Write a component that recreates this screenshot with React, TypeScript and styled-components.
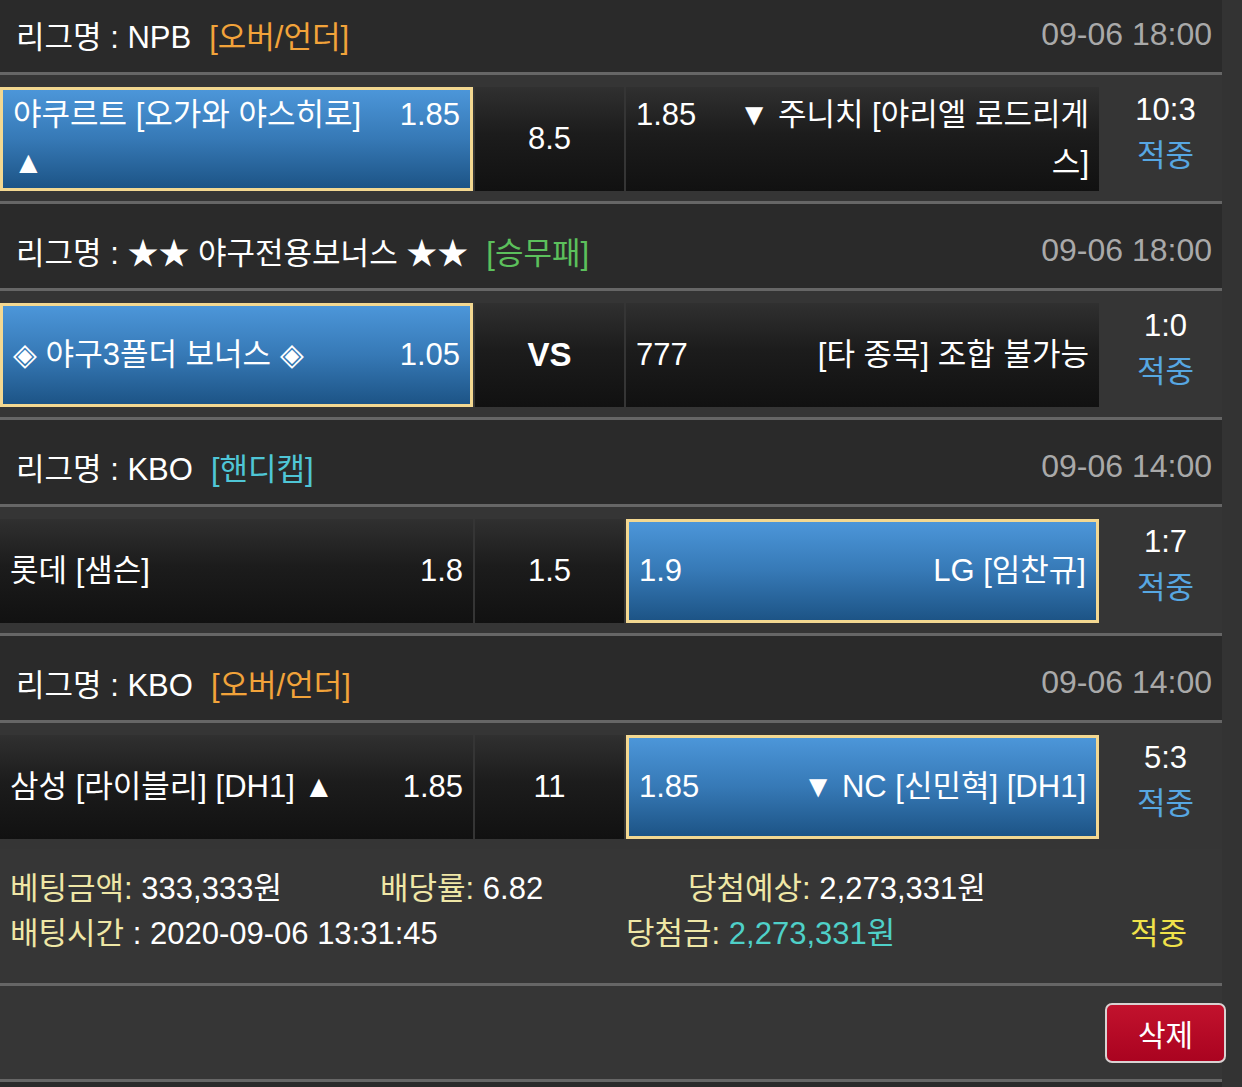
import React from 'react';
import styled, { createGlobalStyle } from 'styled-components';

const GlobalStyle = createGlobalStyle`
    html, body {
        margin: 0;
        padding: 0;
        background-color: #333333;
    }
    body {
        font-family: 'Liberation Sans', 'Noto Sans CJK KR', sans-serif;
        color: #ffffff;
    }
`;

const Page = styled.div`
    width: 1242px;
    height: 1087px;
    overflow: hidden;
    background-color: #333333;
    font-size: 31px;
`;

const List = styled.div`
    width: 1222px;
    margin-top: -12px;
`;

const LeagueHeader = styled.div`
    display: flex;
    align-items: center;
    justify-content: space-between;
    height: 87px;
    box-sizing: border-box;
    padding: 8px 10px 0 16px;
    background-color: #2a2a2a;
    border-bottom: 3px solid #666666;
`;

const LeagueName = styled.div`
    white-space: nowrap;
`;

const Tag = styled.span<{ $color: string }>`
    margin-left: 18px;
    color: ${(p) => p.$color};
`;

const GameTime = styled.div`
    color: #a9a9a9;
    font-size: 32px;
`;

const MatchRow = styled.div<{ $last?: boolean }>`
    display: grid;
    grid-template-columns: 473px 149px 473px 1fr;
    column-gap: 2px;
    height: ${(p) => (p.$last ? '126px' : '129px')};
    box-sizing: border-box;
    padding-bottom: 10px;
    background-color: #353535;
    border-bottom: ${(p) => (p.$last ? 'none' : '3px solid #666666')};
`;

const Cell = styled.div<{ $selected?: boolean }>`
    display: flex;
    align-items: center;
    margin-top: 12px;
    box-sizing: border-box;
    padding: 0 10px;
    line-height: 48px;
    background: ${(p) =>
        p.$selected
            ? 'linear-gradient(180deg, #4c96d9 0%, #3679b6 50%, #1d5486 100%)'
            : 'linear-gradient(180deg, #303030 0%, #1c1c1c 45%, #111111 100%)'};
    border: ${(p) => (p.$selected ? '3px solid #f3d891' : 'none')};
`;

const CellBody = styled.div<{ $align: 'left' | 'right' }>`
    width: 100%;
    text-align: ${(p) => p.$align};
`;

const Odds = styled.span<{ $side: 'left' | 'right' }>`
    float: ${(p) => p.$side};
    ${(p) => (p.$side === 'right' ? 'margin-left: 24px;' : 'margin-right: 24px;')}
`;

const MidCell = styled.div<{ $bold?: boolean }>`
    display: flex;
    align-items: center;
    justify-content: center;
    margin-top: 12px;
    background: linear-gradient(180deg, #303030 0%, #1c1c1c 45%, #111111 100%);
    font-weight: ${(p) => (p.$bold ? 700 : 400)};
    font-size: ${(p) => (p.$bold ? '33px' : '31px')};
`;

const ScoreCell = styled.div`
    display: flex;
    flex-direction: column;
    align-items: center;
    justify-content: center;
    line-height: 46px;
    padding-left: 8px;
`;

const Result = styled.span<{ $color: string }>`
    color: ${(p) => p.$color};
`;

const Summary = styled.div`
    padding: 17px 0 27px 10px;
    background-color: #363636;
    border-bottom: 3px solid #666666;
    line-height: 45px;
`;

const SummaryLine = styled.div<{ $columns: string }>`
    display: grid;
    grid-template-columns: ${(p) => p.$columns};
    white-space: nowrap;
`;

const Label = styled.span`
    color: #efe7a6;
`;

const Value = styled.span<{ $color?: string }>`
    color: ${(p) => p.$color || '#ffffff'};
`;

const Actions = styled.div`
    display: flex;
    justify-content: flex-end;
    align-items: center;
    width: 1222px;
    height: 96px;
    box-sizing: border-box;
    padding-right: 16px;
    background-color: #363636;
    border-bottom: 3px solid #666666;
`;

const DeleteButton = styled.button`
    width: 121px;
    height: 60px;
    margin-right: -20px;
    border: 2px solid #d9d2d2;
    border-radius: 7px;
    background: linear-gradient(180deg, #c2122d 0%, #aa0320 100%);
    color: #ffffff;
    font-family: 'Liberation Sans', 'Noto Sans CJK KR', sans-serif;
    font-size: 30px;
    padding: 0;
`;

const NextHeader = styled.div`
    width: 1222px;
    height: 20px;
    background-color: #2a2a2a;
`;

type Side = { name: string; odds: string; selected?: boolean };

type Game = {
    league: string;
    tag: string;
    tagColor: string;
    time: string;
    home: Side;
    mid: string;
    midBold?: boolean;
    away: Side;
    score: string;
};

const ORANGE = '#f2a33a';
const GREEN = '#5cc05c';
const CYAN = '#4fc6d6';

const games: Game[] = [
    {
        league: 'NPB',
        tag: '[오버/언더]',
        tagColor: ORANGE,
        time: '09-06 18:00',
        home: { name: '야쿠르트 [오가와 야스히로] ▲', odds: '1.85', selected: true },
        mid: '8.5',
        away: { name: '▼ 주니치 [야리엘 로드리게스]', odds: '1.85' },
        score: '10:3',
    },
    {
        league: '★★ 야구전용보너스 ★★',
        tag: '[승무패]',
        tagColor: GREEN,
        time: '09-06 18:00',
        home: { name: '◈ 야구3폴더 보너스 ◈', odds: '1.05', selected: true },
        mid: 'VS',
        midBold: true,
        away: { name: '[타 종목] 조합 불가능', odds: '777' },
        score: '1:0',
    },
    {
        league: 'KBO',
        tag: '[핸디캡]',
        tagColor: CYAN,
        time: '09-06 14:00',
        home: { name: '롯데 [샘슨]', odds: '1.8' },
        mid: '1.5',
        away: { name: 'LG [임찬규]', odds: '1.9', selected: true },
        score: '1:7',
    },
    {
        league: 'KBO',
        tag: '[오버/언더]',
        tagColor: ORANGE,
        time: '09-06 14:00',
        home: { name: '삼성 [라이블리] [DH1] ▲', odds: '1.85' },
        mid: '11',
        away: { name: '▼ NC [신민혁] [DH1]', odds: '1.85', selected: true },
        score: '5:3',
    },
];

function App() {
    return (
        <Page>
            <GlobalStyle />
            <List>
                {games.map((g, i) => (
                    <React.Fragment key={i}>
                        <LeagueHeader>
                            <LeagueName>
                                리그명 : {g.league}
                                <Tag $color={g.tagColor}>{g.tag}</Tag>
                            </LeagueName>
                            <GameTime>{g.time}</GameTime>
                        </LeagueHeader>
                        <MatchRow $last={i === games.length - 1}>
                            <Cell $selected={g.home.selected}>
                                <CellBody $align="left">
                                    <Odds $side="right">{g.home.odds}</Odds>
                                    {g.home.name}
                                </CellBody>
                            </Cell>
                            <MidCell $bold={g.midBold}>{g.mid}</MidCell>
                            <Cell $selected={g.away.selected}>
                                <CellBody $align="right">
                                    <Odds $side="left">{g.away.odds}</Odds>
                                    {g.away.name}
                                </CellBody>
                            </Cell>
                            <ScoreCell>
                                <span>{g.score}</span>
                                <Result $color="#57a7e2">적중</Result>
                            </ScoreCell>
                        </MatchRow>
                    </React.Fragment>
                ))}
                <Summary>
                    <SummaryLine $columns="370px 308px 1fr">
                        <span>
                            <Label>베팅금액:</Label> <Value>333,333원</Value>
                        </span>
                        <span>
                            <Label>배당률:</Label> <Value>6.82</Value>
                        </span>
                        <span>
                            <Label>당첨예상:</Label> <Value>2,273,331원</Value>
                        </span>
                    </SummaryLine>
                    <SummaryLine $columns="616px 504px 1fr">
                        <span>
                            <Label>배팅시간</Label> <Value>: 2020-09-06 13:31:45</Value>
                        </span>
                        <span>
                            <Label>당첨금:</Label> <Value $color="#4fd0c8">2,273,331원</Value>
                        </span>
                        <Value $color="#f0e24a">적중</Value>
                    </SummaryLine>
                </Summary>
            </List>
            <Actions>
                <DeleteButton>삭제</DeleteButton>
            </Actions>
            <NextHeader />
        </Page>
    );
}

export default App;
